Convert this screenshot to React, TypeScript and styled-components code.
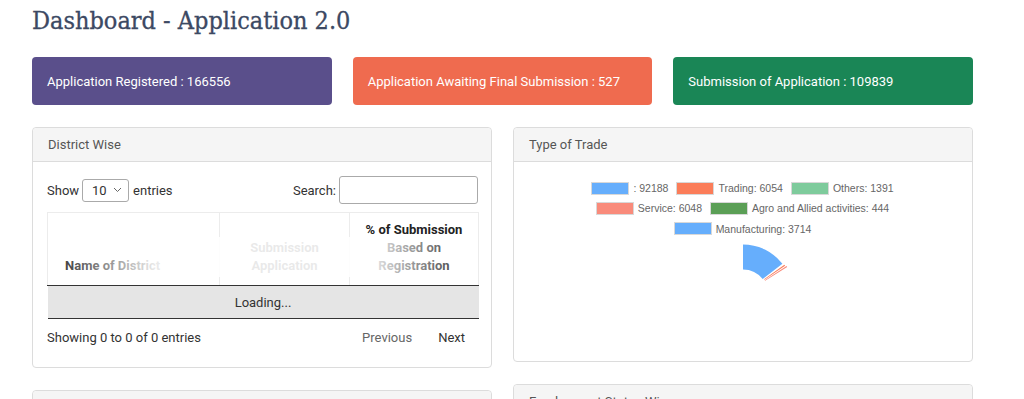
import React from 'react';
import styled, { createGlobalStyle } from 'styled-components';

const GlobalStyle = createGlobalStyle`
  html, body { margin: 0; padding: 0; background: #fff; }
  body { font-family: Roboto, "Noto Sans", sans-serif; font-size: 13px; color: #333; }
  * { box-sizing: border-box; }
`;

const Page = styled.div`
  width: 941px;
  margin-left: 32px;
`;

const Title = styled.h1`
  margin: 0;
  height: 57px;
  padding-top: 4px;
  font-family: "DejaVu Serif", serif;
  font-stretch: condensed;
  font-weight: 400;
  font-size: 25px;
  line-height: 34px;
  color: #3c4963;
  -webkit-text-stroke: 0.3px #3c4963;
`;

const StatRow = styled.div`
  display: grid;
  grid-template-columns: repeat(3, minmax(0, 1fr));
  gap: 21px;
`;

const StatCard = styled.div<{ $bg: string }>`
  height: 48px;
  border-radius: 4px;
  background: ${(p) => p.$bg};
  color: #fff;
  display: flex;
  align-items: center;
  padding-left: 15px;
  font-size: 13px;
`;

const Columns = styled.div`
  display: grid;
  grid-template-columns: minmax(0, 1fr) minmax(0, 1fr);
  gap: 21px;
  margin-top: 22px;
  align-items: start;
`;

const Column = styled.div`
  display: flex;
  flex-direction: column;
  gap: 22px;
  min-width: 0;
`;

const Panel = styled.section`
  border: 1px solid #dcdcdc;
  border-radius: 4px;
  background: #fff;
`;

const PanelHeader = styled.div`
  height: 34px;
  padding: 0 15px;
  display: flex;
  align-items: center;
  background: #f5f5f5;
  border-bottom: 1px solid #dcdcdc;
  border-radius: 4px 4px 0 0;
  color: #555;
  font-size: 13px;
`;

const TableBody = styled.div`
  padding: 14px 13px 12px 14px;
`;

const TableWrap = styled.div`
  position: relative;
`;

const Controls = styled.div`
  height: 28px;
  display: flex;
  align-items: center;
  justify-content: space-between;
`;

const LengthControl = styled.label`
  display: flex;
  align-items: center;
  gap: 3px;
`;

const FakeSelect = styled.span`
  width: 47px;
  height: 23px;
  border: 1px solid #aaa;
  border-radius: 3px;
  display: flex;
  align-items: center;
  justify-content: space-between;
  padding: 0 6px 0 9px;
  margin-right: 1px;
  color: #333;
`;

const SearchControl = styled.label`
  display: flex;
  align-items: center;
  gap: 3px;
`;

const SearchInput = styled.span`
  width: 139px;
  height: 28px;
  border: 1px solid #aaa;
  border-radius: 3px;
  display: block;
`;

const DataTable = styled.table`
  width: 100%;
  margin-top: 8px;
  border-collapse: collapse;
  table-layout: fixed;
`;

const Th = styled.th<{ $align?: string }>`
  vertical-align: bottom;
  padding: 8px 10px 10px ${(p) => (p.$align === 'left' ? '17px' : '10px')};
  text-align: ${(p) => p.$align || 'center'};
  font-weight: 700;
  font-size: 13px;
  line-height: 18px;
  color: #222;
  border-top: 1px solid #ececec;
  border-left: 1px solid #ececec;
  border-right: 1px solid #ececec;
  border-bottom: 1px solid #333;
  height: 73px;
`;

const LoadingCell = styled.td`
  height: 33px;
  background: #e5e5e5;
  text-align: center;
  border-bottom: 1px solid #333;
  color: #333;
`;

const Footer = styled.div`
  height: 36px;
  display: flex;
  align-items: center;
  justify-content: space-between;
`;

const Pager = styled.div`
  display: flex;
  align-items: center;
`;

const PageButton = styled.span<{ $disabled?: boolean }>`
  padding: 0 13px;
  color: ${(p) => (p.$disabled ? '#666' : '#333')};
`;

const ProcessingOverlay = styled.div`
  position: absolute;
  left: 0;
  top: 61px;
  width: 100%;
  height: 40px;
  background: linear-gradient(
    to right,
    rgba(255, 255, 255, 0) 0%,
    rgba(255, 255, 255, 0.9) 25%,
    rgba(255, 255, 255, 0.9) 75%,
    rgba(255, 255, 255, 0) 100%
  );
  pointer-events: none;
`;

const ChartBody = styled.div`
  height: 199px;
  padding-top: 16px;
  display: flex;
  flex-direction: column;
  align-items: center;
`;

const LegendRow = styled.div`
  height: 20.5px;
  display: flex;
  align-items: center;
  justify-content: center;
  gap: 9px;
`;

const LegendItem = styled.div`
  display: flex;
  align-items: center;
  gap: 5px;
  font-family: "Liberation Sans", Arial, sans-serif;
  font-size: 10.5px;
  color: #666;
`;

const LegendBox = styled.span<{ $color: string }>`
  width: 36px;
  height: 11px;
  background: ${(p) => p.$color};
  box-shadow: 0 0 0 1px rgba(200, 200, 200, 0.7);
`;

const ChartSvg = styled.svg`
  display: block;
  flex: none;
`;

const EmptyBody = styled.div`
  height: 200px;
`;

const BLUE = '#66aefc';
const ORANGE = '#fb7d59';
const GREEN = '#7ecb9c';
const SALMON = '#f98b7b';
const DGREEN = '#5b9f56';

const legendRows: { color: string; label: string }[][] = [
  [
    { color: BLUE, label: ': 92188' },
    { color: ORANGE, label: 'Trading: 6054' },
    { color: GREEN, label: 'Others: 1391' },
  ],
  [
    { color: SALMON, label: 'Service: 6048' },
    { color: DGREEN, label: 'Agro and Allied activities: 444' },
  ],
  [{ color: BLUE, label: 'Manufacturing: 3714' }],
];

function sector(cx: number, cy: number, R: number, r: number, a0: number, a1: number) {
  const rad = (d: number) => (d * Math.PI) / 180;
  const pt = (rr: number, a: number) => [cx + rr * Math.sin(rad(a)), cy - rr * Math.cos(rad(a))];
  const [x0, y0] = pt(R, a0);
  const [x1, y1] = pt(R, a1);
  const [x2, y2] = pt(r, a1);
  const [x3, y3] = pt(r, a0);
  const large = a1 - a0 > 180 ? 1 : 0;
  return `M${x0},${y0} A${R},${R} 0 ${large} 1 ${x1},${y1} L${x2},${y2} A${r},${r} 0 ${large} 0 ${x3},${y3} Z`;
}

const ChevronDown = () => (
  <svg width="9" height="6" viewBox="0 0 9 6">
    <path d="M1 1 L4.5 4.5 L8 1" fill="none" stroke="#666" strokeWidth="1" />
  </svg>
);

const Doughnut = () => {
  const cx = 229;
  const cy = 55.5;
  return (
    <ChartSvg width="458" height="122" viewBox="0 0 458 122">
      <path d={sector(cx, cy, 50, 25, 0, 52)} fill={BLUE} />
      <path d={sector(cx, cy, 51, 26, 54.2, 55.6)} fill={ORANGE} />
      <path d={sector(cx, cy, 52, 26, 56.8, 58.2)} fill={SALMON} />
    </ChartSvg>
  );
};

export default function App() {
  return (
    <>
      <GlobalStyle />
      <Page>
        <Title>Dashboard - Application 2.0</Title>
        <StatRow>
          <StatCard $bg="#5a4f8b">Application Registered : 166556</StatCard>
          <StatCard $bg="#ef6b4f">Application Awaiting Final Submission : 527</StatCard>
          <StatCard $bg="#1a8656">Submission of Application : 109839</StatCard>
        </StatRow>
        <Columns>
          <Column>
            <Panel>
              <PanelHeader>District Wise</PanelHeader>
              <TableBody>
                <TableWrap>
                  <Controls>
                    <LengthControl>
                      Show
                      <FakeSelect>
                        10
                        <ChevronDown />
                      </FakeSelect>
                      entries
                    </LengthControl>
                    <SearchControl>
                      Search:
                      <SearchInput />
                    </SearchControl>
                  </Controls>
                  <DataTable>
                    <colgroup>
                      <col style={{ width: '172px' }} />
                      <col style={{ width: '130px' }} />
                      <col style={{ width: '129px' }} />
                    </colgroup>
                    <thead>
                      <tr>
                        <Th $align="left">Name of District</Th>
                        <Th>Submission Application</Th>
                        <Th>
                          % of Submission
                          <br />
                          Based on Registration
                        </Th>
                      </tr>
                    </thead>
                    <tbody>
                      <tr>
                        <LoadingCell colSpan={3}>Loading...</LoadingCell>
                      </tr>
                    </tbody>
                  </DataTable>
                  <Footer>
                    <span>Showing 0 to 0 of 0 entries</span>
                    <Pager>
                      <PageButton $disabled>Previous</PageButton>
                      <PageButton>Next</PageButton>
                    </Pager>
                  </Footer>
                  <ProcessingOverlay />
                </TableWrap>
              </TableBody>
            </Panel>
            <Panel>
              <PanelHeader>Category Wise</PanelHeader>
              <EmptyBody />
            </Panel>
          </Column>
          <Column>
            <Panel>
              <PanelHeader>Type of Trade</PanelHeader>
              <ChartBody>
                {legendRows.map((row, i) => (
                  <LegendRow key={i}>
                    {row.map((item) => (
                      <LegendItem key={item.label}>
                        <LegendBox $color={item.color} />
                        {item.label}
                      </LegendItem>
                    ))}
                  </LegendRow>
                ))}
                <Doughnut />
              </ChartBody>
            </Panel>
            <Panel>
              <PanelHeader>Employment Status Wise</PanelHeader>
              <EmptyBody />
            </Panel>
          </Column>
        </Columns>
      </Page>
    </>
  );
}
